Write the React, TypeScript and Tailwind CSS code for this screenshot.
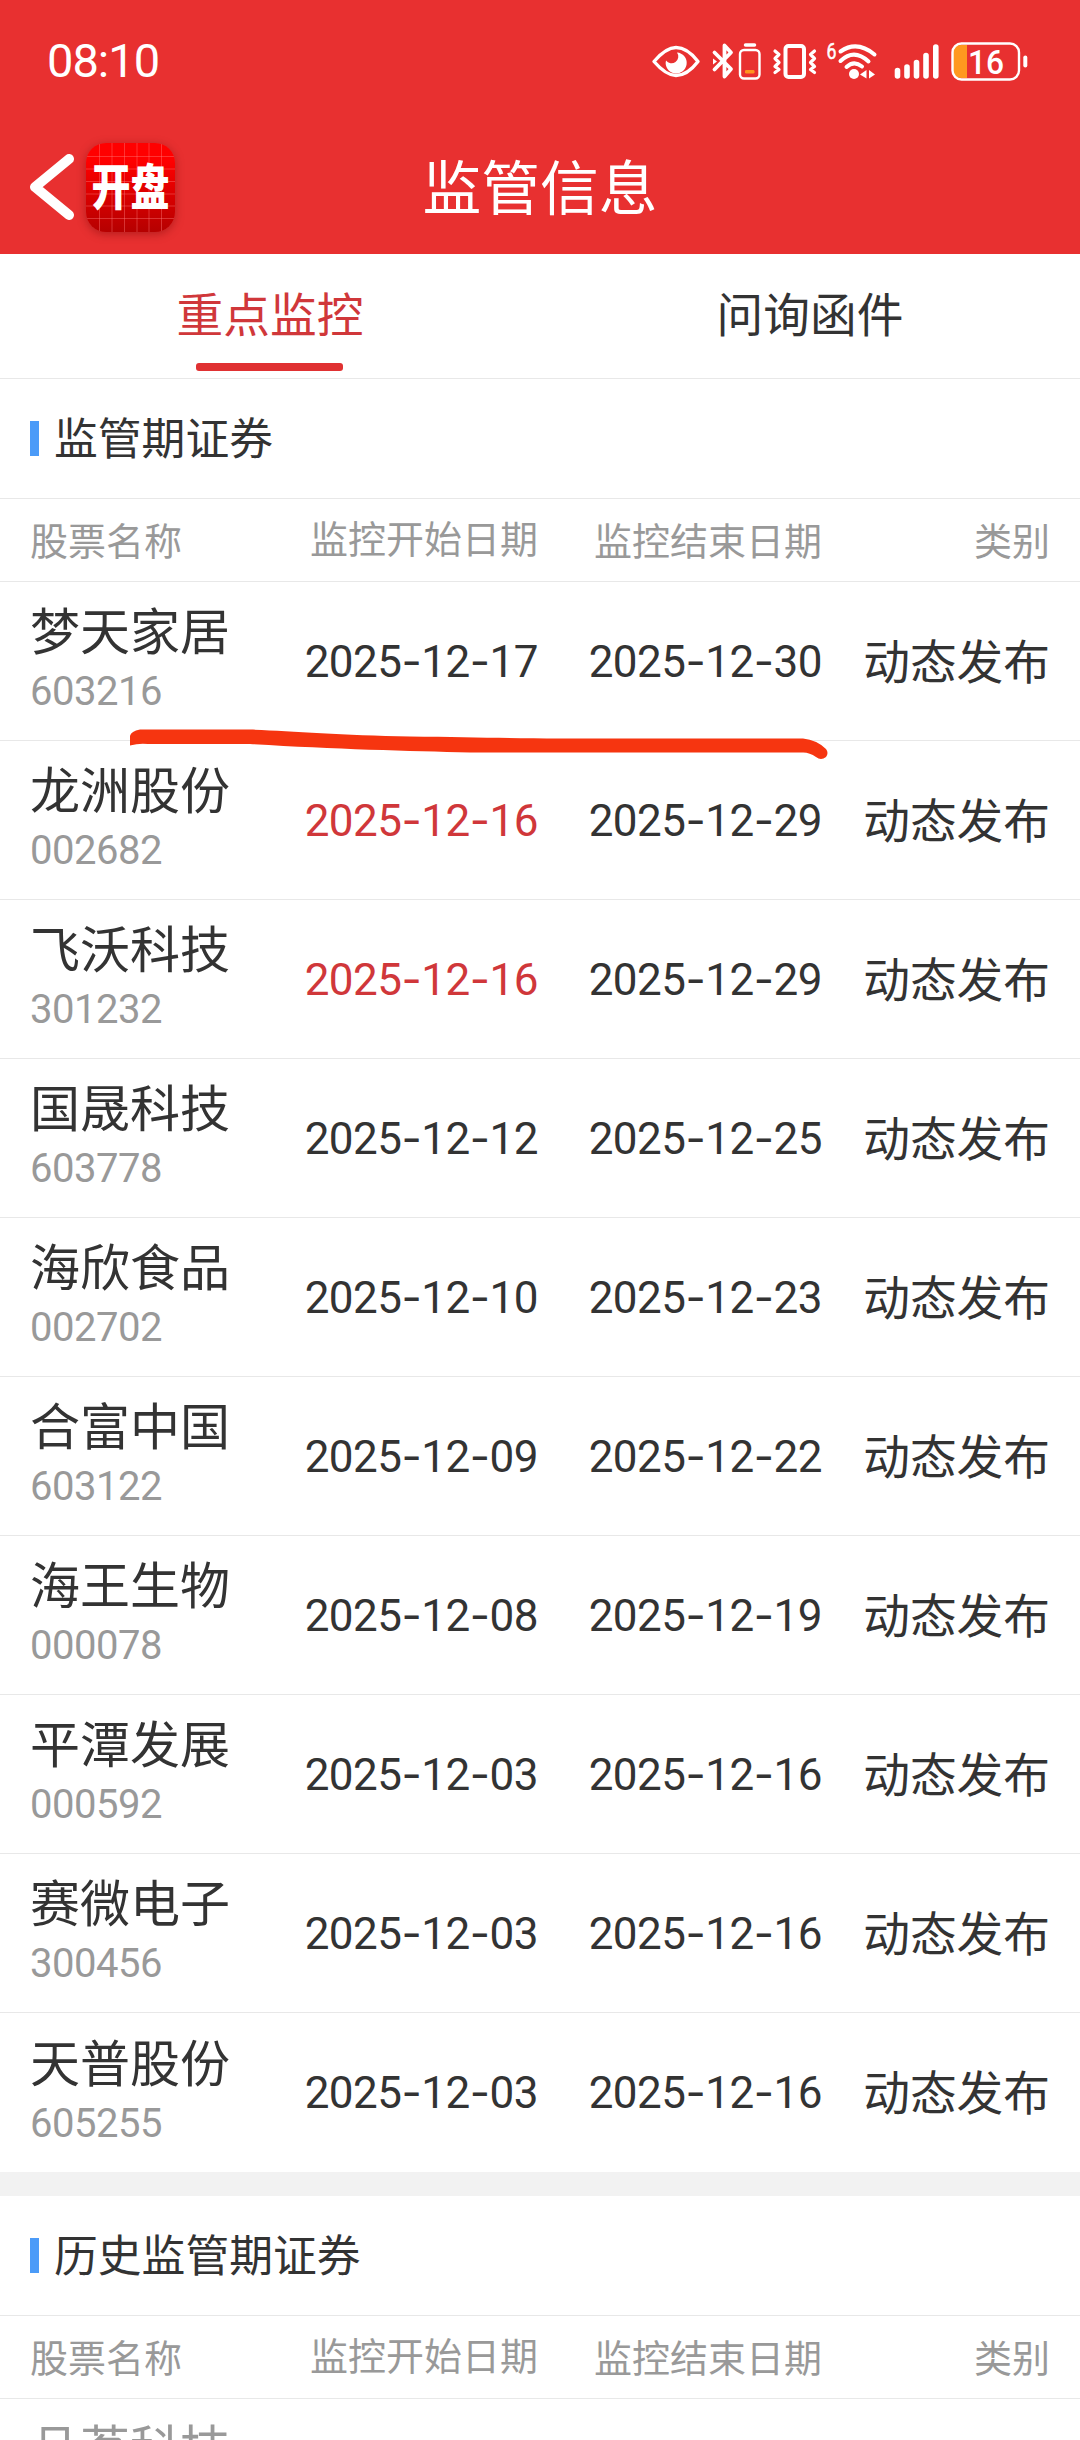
import React from 'react';

interface Stock {
  name: string;
  code: string;
  start: string;
  end: string;
  highlight?: boolean;
}

const stocks: Stock[] = [
  { name: '梦天家居', code: '603216', start: '2025-12-17', end: '2025-12-30' },
  { name: '龙洲股份', code: '002682', start: '2025-12-16', end: '2025-12-29', highlight: true },
  { name: '飞沃科技', code: '301232', start: '2025-12-16', end: '2025-12-29', highlight: true },
  { name: '国晟科技', code: '603778', start: '2025-12-12', end: '2025-12-25' },
  { name: '海欣食品', code: '002702', start: '2025-12-10', end: '2025-12-23' },
  { name: '合富中国', code: '603122', start: '2025-12-09', end: '2025-12-22' },
  { name: '海王生物', code: '000078', start: '2025-12-08', end: '2025-12-19' },
  { name: '平潭发展', code: '000592', start: '2025-12-03', end: '2025-12-16' },
  { name: '赛微电子', code: '300456', start: '2025-12-03', end: '2025-12-16' },
  { name: '天普股份', code: '605255', start: '2025-12-03', end: '2025-12-16' },
];

const StatusIcons = () => (
  <svg className="w-[380px] h-[60px]" viewBox="650 30 380 60" fill="none" stroke="#fff" strokeLinecap="round" strokeLinejoin="round">
    {/* eye */}
    <path d="M654 60.500C663 50 669 46.500 676 46.500S690 50 698 60.500C690 71 683 74.500 676 74.500S663 71 654 60.500Z" strokeWidth="3.400" />
    <path d="M677 51.500a10.500 10.500 0 1 1-11 8a5.500 5.500 0 1 0 11-8z" fill="#fff" stroke="none" />
    {/* bluetooth */}
    <path d="M714.500 51.500L731 68L724.500 75.500V44.500L731 51.500L714.500 68.500" strokeWidth="3.800" />
    <path d="M713 57.500L717 60.500L713 63.500Z" fill="#fff" stroke="none" />
    {/* accessory battery */}
    <path d="M745.500 44H754.500" strokeWidth="3.500" />
    <rect x="740" y="49" width="19.500" height="28.500" rx="4" strokeWidth="2.400" />
    <rect x="745" y="69" width="9.500" height="3.500" rx="1.200" fill="#ff9420" stroke="none" />
    {/* vibrate */}
    <rect x="785.500" y="45" width="18.500" height="31" rx="3" strokeWidth="4" />
    <path d="M775 50L779 53.500L775 57.500L779 61.500L775 65.500L779 68.500L775 71.500M814.500 50L810.500 53.500L814.500 57.500L810.500 61.500L814.500 65.500L810.500 68.500L814.500 71.500" strokeWidth="3.200" />
    {/* wifi */}
    <text x="826.500" y="58" fontSize="22" fontFamily="Roboto, sans-serif" fill="#fff" stroke="#fff" strokeWidth="0.500" textLength="10" lengthAdjust="spacingAndGlyphs">6</text>
    <path d="M840.500 50.500Q857 39 874.500 53.500M840.500 60Q854 47 868.500 60.500M846.500 66Q854 59 862 65.500" strokeWidth="4" />
    <circle cx="854" cy="73" r="5" fill="#fff" stroke="none" />
    <path d="M866.500 69V77.500L860 73.500ZM869 69V77.500L875 73.500Z" fill="#fff" stroke="none" />
    {/* signal */}
    <path d="M897.500 69.500V75M907 66V75M916.500 61.500V75M926 54.500V75M935.800 46V75" strokeWidth="5.600" />
    {/* battery */}
    <path d="M967 44H961Q953 44 953 52V69Q953 77 961 77H967Z" fill="#ff981f" stroke="none" />
    <rect x="952.500" y="42.500" width="66.500" height="36" rx="9" strokeWidth="2.400" />
    <path d="M1025.300 56.500V64.500" strokeWidth="4" />
    <text x="968" y="73" fontSize="34" fontWeight="500" fontFamily="Roboto, sans-serif" fill="#fff" stroke="none" textLength="36" lengthAdjust="spacingAndGlyphs">16</text>
  </svg>
);

const AppBadge = () => (
  <div className="relative w-[89px] h-[89px] rounded-[20px] bg-gradient-to-b from-[#ff0000] from-20% to-[#b50000] overflow-hidden shadow-[0_2px_10px_rgba(100,0,0,0.4)] flex items-center justify-center">
    <svg className="absolute inset-0 w-full h-full" viewBox="0 0 89 89" stroke="#ff8080" strokeOpacity="0.4" strokeWidth="1">
      <path d="M13.500 0V89M26 0V89M38.500 0V89M51 0V89M63 0V89M75.500 0V89M0 13.500H89M0 26H89M0 38.500H89M0 51H89M0 63H89M0 75.500H89" />
    </svg>
    <span className="relative -top-[3px] text-[39px] leading-none font-black text-white scale-y-[1.26] whitespace-nowrap">开盘</span>
  </div>
);

const DateText = ({ value }: { value: string }) => (
  <span className="font-[Roboto] text-[44px] leading-[50px] tracking-[-0.5px] whitespace-nowrap">
    {value.split('-').map((part, i) => (
      <React.Fragment key={i}>
        {i > 0 && <span className="font-[Inter]">-</span>}
        {part}
      </React.Fragment>
    ))}
  </span>
);

const SectionTitle = ({ children }: { children: React.ReactNode }) => (
  <div className="h-[120px] border-b border-[#e8e8e8] flex items-center pl-[30px]">
    <div className="w-[9px] h-[35px] bg-[#4b9bf8]" />
    <h2 className="ml-[15px] pb-[5px] text-[43.800px] leading-[60px]">{children}</h2>
  </div>
);

const TableHead = () => (
  <div className="h-[83px] border-b border-[#e8e8e8] grid grid-cols-[244px_264px_284px_228px] items-center pl-[30px] text-[38px] leading-[50px] text-[#999]">
    <span className="pb-[3px]">股票名称</span>
    <span className="text-right pb-[7px]">监控开始日期</span>
    <span className="text-right pb-[3px]">监控结束日期</span>
    <span className="text-right pb-[3px]">类别</span>
  </div>
);

const StockRow = ({ stock }: { stock: Stock }) => (
  <div className="h-[159px] border-b border-[#e8e8e8] last:border-b-0 grid grid-cols-[244px_264px_284px_228px] items-center pl-[30px]">
    <div>
      <div className="mb-3 text-[50px] leading-[50px]">{stock.name}</div>
      <div className="font-[Roboto] text-[40px] leading-[54px] tracking-[-0.5px] text-[#999]">{stock.code}</div>
    </div>
    <div className={stock.highlight ? 'text-right text-[#d0373a]' : 'text-right'}>
      <DateText value={stock.start} />
    </div>
    <div className="text-right">
      <DateText value={stock.end} />
    </div>
    <div className="pb-[5px] text-right text-[46.700px] leading-[60px]">动态发布</div>
  </div>
);

const App: React.FC = () => {
  return (
    <div className="relative w-[1080px] h-[2440px] overflow-hidden bg-white text-[#333] font-['Noto_Sans_CJK_SC',sans-serif]">
      <header className="h-[254px] bg-[#e83030] text-white">
        <div className="h-[122px] flex items-center justify-between pl-[47px] pr-[50px]">
          <span className="font-[Roboto] text-[47px] tracking-[-1px]">08:10</span>
          <StatusIcons />
        </div>
        <div className="h-[130px] grid grid-cols-[1fr_auto_1fr] items-center">
          <div className="flex items-center pl-[30px]">
            <svg className="w-11 h-[66px]" viewBox="0 0 44 66" fill="none" stroke="#fff" strokeWidth="10" strokeLinecap="round" strokeLinejoin="round">
              <path d="M39 5L5 33L39 61" />
            </svg>
            <div className="ml-3">
              <AppBadge />
            </div>
          </div>
          <h1 className="pb-1 text-[58.800px] leading-[70px]">监管信息</h1>
        </div>
      </header>

      <nav className="h-[125px] border-b border-[#e8e8e8] grid grid-cols-2 text-center text-[46.700px] leading-[60px]">
        <div className="pt-7 flex flex-col items-center justify-between pb-[7px] text-[#d0373a]">
          <span>重点监控</span>
          <div className="w-[147px] h-2 mr-[2px] rounded-[3px] bg-[#e03132]" />
        </div>
        <div className="pt-7">问询函件</div>
      </nav>

      <SectionTitle>监管期证券</SectionTitle>
      <TableHead />
      <div>
        {stocks.map(stock => (
          <StockRow key={stock.code} stock={stock} />
        ))}
      </div>

      <div className="h-6 bg-[#f2f2f2]" />

      <SectionTitle>历史监管期证券</SectionTitle>
      <TableHead />
      <div className="pt-[21px] pl-[30px] text-[50px] leading-[50px] text-[#999]">品茗科技</div>

      {/* marker stroke under the first row */}
      <svg className="absolute left-[120px] top-[720px] w-[720px] h-[50px]" viewBox="120 720 720 50">
        <path d="M130 745.500V736Q131 731 140 729.500H250C290 731 340 735 410 736.500C470 737 510 738.500 560 738.500H803Q817 740 826 749Q829 753 826 757Q821 761 816 757Q809 752 802 752.500H470C410 751 330 749 250 744H148Q139 743 130 745.500Z" fill="#f63510" />
      </svg>
    </div>
  );
};

export default App;
